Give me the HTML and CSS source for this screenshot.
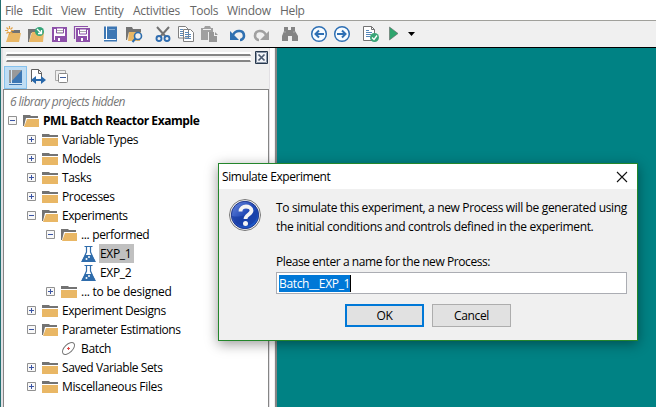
FILE: index.html
```
<!DOCTYPE html>
<html lang="en"><head><meta charset="utf-8"><title>PML Batch Reactor Example</title><link rel="stylesheet" href="styles.css"></head>
<body>
<svg class="defs" width="0" height="0">
 <symbol id="plus" viewBox="0 0 9 9"><path d="M.5 .5h8v8h-8z" fill="#f8f8f8" stroke="#919191"/><path d="M2 4.5h5M4.5 2v5" stroke="#3a54a4"/></symbol>
 <symbol id="minus" viewBox="0 0 9 9"><path d="M.5 .5h8v8h-8z" fill="#f8f8f8" stroke="#919191"/><path d="M2 4.5h5" stroke="#3a54a4"/></symbol>
 <symbol id="folder" viewBox="0 0 16 13"><path d="M0 1h7l1 1h8v2H0z" fill="#737373"/><path d="M0 4h16v1H0z" fill="#fff"/><path d="M0 5h16v8H0z" fill="#e9b765"/></symbol>
 <symbol id="open" viewBox="0 0 16 13"><path d="M0 1h7l1 1h7v2H3L1 12H0z" fill="#737373"/><path d="M4 5h12v8H1z" fill="#e9b765"/></symbol>
 <symbol id="flask" viewBox="0 0 15 16"><path d="M3.500 .5h8" stroke="#2f6cab"/><path d="M5.500 1v5L2 14h11L9.500 6V1" fill="#fff" stroke="#2f6cab" stroke-width="1.200"/><path d="M4 9h7l4 7H0z" fill="#2f6cab"/><circle cx="5.500" cy="13" r="1" fill="#fff"/><circle cx="8" cy="11" r="1" fill="#fff"/></symbol>
</svg>
<div class="app">
 <nav class="menu"><span class="m1">File</span><span class="m2">Edit</span><span class="m3">View</span><span class="m4">Entity</span><span class="m5">Activities</span><span class="m6">Tools</span><span class="m7">Window</span><span class="m8">Help</span></nav>
 <div class="toolbar"><svg width="420" height="26" viewBox="0 21 420 26">
  <path d="M8 30h12v3H8z" fill="#737373"/><path d="M9 33h12l-2 9H6z" fill="#e9b765"/><path d="M9.500 26v9M5 30.500h9M6.500 27.500l6 6M12.500 27.500l-6 6" stroke="#e2a348" stroke-width="1.200"/><circle cx="9.500" cy="30.500" r="1.500" fill="#fff"/>
  <path d="M28 29h8v4h-5l-2 9h-1z" fill="#737373"/><path d="M32 32h12l-1 10H29z" fill="#e9b765"/><circle cx="39.500" cy="31.500" r="4.500" fill="#36a579"/><path d="M37 29l4 4M41.500 30v3.500H38" stroke="#fff" fill="none" stroke-width="1.300"/>
  <g fill="#fff" stroke="#8d50a9" stroke-width="2"><path d="M53 28h13v13H53z"/><path d="M56.500 28h7v5h-7z" stroke-width="1"/><path d="M56 37h8v4h-8z" fill="#8d50a9"/><path d="M59 38v3" stroke="#fff"/><path d="M74.500 39V26.500H88" fill="none" stroke-width="1.200"/><path d="M77 29h12v12H77z"/><path d="M79.500 29h7v5h-7z" stroke-width="1"/><path d="M79 37h7v4h-7z" fill="#8d50a9"/><path d="M82 38v3" stroke="#fff"/></g><path d="M57 30.500h6M57 32.500h6M80 31.500h6" stroke="#aaa"/>
  <path d="M104 26.500h13v15h-13z" fill="#3d77b4"/><path d="M106.500 26v13M104 39.500h12" stroke="#fff"/><path d="M109 29.500h6" stroke="#86add2"/>
  <path d="M126 27h6l1 2h8v3h-12l-2 8h-1z" fill="#737373"/><path d="M129 32h12l-1 9h-12z" fill="#e9b765"/><circle cx="138" cy="36" r="3.500" fill="#f0f0f0" stroke="#2d6dad" stroke-width="1.600"/><path d="M135.500 38.500L132.500 42" stroke="#2d6dad" stroke-width="2"/>
  <path d="M157 27l9 10M169 27l-9 10" stroke="#737373" stroke-width="2"/><g fill="none" stroke="#2f6db0" stroke-width="1.900"><circle cx="159" cy="38.500" r="2.500"/><circle cx="167" cy="38.500" r="2.500"/></g>
  <path d="M178.500 26.500h7l3 3V38h-10zM183.500 29.500h7l3 3v9h-10z" fill="#fff" stroke="#808080"/><path d="M180 29.500h3M180 31.500h3M180 33.500h3M180 35.500h3M185 32.500h4M185 34.500h6M185 36.500h6M185 38.500h6" stroke="#5d8ab8"/>
  <path d="M201 28h3l1-2h5l1 2h2v4h-5v8h-7z" fill="#a0a0a0"/><path d="M203 29.500h8" stroke="#eee"/><path d="M209 32h5v4h3v6h-8z" fill="#969696"/><path d="M215 32l3 3h-3z" fill="#969696"/>
  <path d="M233 35c3-6 11-5 11 1 0 2-2 4-4 4" stroke="#2f70b1" stroke-width="2.600" fill="none"/><path d="M230 31v9h9z" fill="#2f70b1"/>
  <path d="M266 35c-3-6-11-5-11 1 0 2 2 4 4 4" stroke="#a0a0a0" stroke-width="2.600" fill="none"/><path d="M269 31v9h-9z" fill="#a0a0a0"/>
  <path d="M284 27h4v3h3v-3h4v4l3 5v5h-6v-5h-4v5h-6v-5l2-5z" fill="#858585"/><path d="M285 31v2M294 31v2" stroke="#aaa"/>
  <g stroke="#2f70b4" fill="#f8fcff"><circle cx="319" cy="34" r="7.300" stroke-width="1.500"/><circle cx="342" cy="34" r="7.300" stroke-width="1.500"/><path d="M324 34h-8M319 30.500L315.500 34l3.500 3.500M337 34h8M342 30.500l3.500 3.500-3.500 3.500" fill="none" stroke-width="2"/></g>
  <path d="M363.500 26.500h8l3 3v11h-11z" fill="#fff" stroke="#737373"/><path d="M371.500 26.500v3h3" fill="none" stroke="#737373"/><path d="M366 30.500h3M366 32.500h6M366 34.500h5M366 36.500h4" stroke="#5687b9"/><circle cx="374.500" cy="37.500" r="4.500" fill="#39a577"/><path d="M372 37.500l2 2 3-4" fill="none" stroke="#fff" stroke-width="1.300"/>
  <path d="M389.500 27l8.500 6.500-8.500 6.500z" fill="#2fa56e" stroke="#666" stroke-width=".6"/><path d="M408 32h7l-3.500 4z" fill="#000"/>
 </svg></div>
 <div class="work">
  <aside class="side">
   <div class="head"><div class="grips"><i></i><i></i></div><svg width="13" height="13"><path d="M.5 .5h12v12H.5z" fill="#f2f4f8" stroke="#27384d"/><path d="M1.500 1.500h10v10h-10z" fill="none" stroke="#8d99aa"/><path d="M3.500 3.500l6 6M9.500 3.500l-6 6" stroke="#4d5c72" stroke-width="1.700"/></svg></div>
   <div class="tools"><span class="selected"><svg width="16" height="18" viewBox="0 0 16 18"><path d="M1 1h13v15H1z" fill="#3d77b4"/><path d="M1 1h13L1 15z" fill="#999"/><path d="M3.500 1v13M1 14.500h13" stroke="#d6e7f5"/></svg></span>
   <svg class="link" width="16" height="18" viewBox="0 0 16 18"><path d="M1.500 14V1.500h7l3 3v5M8.500 1.500v4h3" fill="#fff" stroke="#606060"/><path d="M4 12h9" stroke="#2767a9" stroke-width="2"/><path d="M1 12l5-4v8zM16 12l-5-4v8z" fill="#2767a9"/></svg>
   <svg class="collapse" width="14" height="14" viewBox="0 0 14 14"><path d="M.5 .5h10v10H.5z" fill="#eee" stroke="#aaa"/><rect x="3.500" y="3.500" width="9" height="9" rx="1" fill="#fff" stroke="#888"/><path d="M5 7.500h6" stroke="#3e5c9b"/></svg></div>
   <div class="tree"><div class="note">6 library projects hidden</div>
    <div class="row l0"><svg class="exp"><use href="#minus"/></svg><svg class="ico"><use href="#open"/></svg><b>PML Batch Reactor Example</b></div>
    <div class="row l1"><svg class="exp"><use href="#plus"/></svg><svg class="ico"><use href="#folder"/></svg><span>Variable Types</span></div>
    <div class="row l1"><svg class="exp"><use href="#plus"/></svg><svg class="ico"><use href="#folder"/></svg><span>Models</span></div>
    <div class="row l1"><svg class="exp"><use href="#plus"/></svg><svg class="ico"><use href="#folder"/></svg><span>Tasks</span></div>
    <div class="row l1"><svg class="exp"><use href="#plus"/></svg><svg class="ico"><use href="#folder"/></svg><span>Processes</span></div>
    <div class="row l1"><svg class="exp"><use href="#minus"/></svg><svg class="ico"><use href="#open"/></svg><span class="tight">Experiments</span></div>
    <div class="row l2"><svg class="exp"><use href="#minus"/></svg><svg class="ico"><use href="#open"/></svg><span>... performed</span></div>
    <div class="row l3"><svg class="flask"><use href="#flask"/></svg><span class="current">EXP_1</span></div>
    <div class="row l3"><svg class="flask"><use href="#flask"/></svg><span>EXP_2</span></div>
    <div class="row l2"><svg class="exp"><use href="#plus"/></svg><svg class="ico"><use href="#folder"/></svg><span class="loose">... to be designed</span></div>
    <div class="row l1"><svg class="exp"><use href="#plus"/></svg><svg class="ico"><use href="#folder"/></svg><span class="tight">Experiment Designs</span></div>
    <div class="row l1"><svg class="exp"><use href="#minus"/></svg><svg class="ico"><use href="#open"/></svg><span class="tight">Parameter Estimations</span></div>
    <div class="row batch"><svg width="16" height="16" viewBox="0 0 16 16"><ellipse cx="7.500" cy="7.500" rx="7.500" ry="4" transform="rotate(-44 7.500 7.500)" fill="#fff" stroke="#777"/><path d="M6 7.500h3M7.500 6v3" stroke="#e04848"/></svg><span>Batch</span></div>
    <div class="row l1"><svg class="exp"><use href="#plus"/></svg><svg class="ico"><use href="#folder"/></svg><span class="tight">Saved Variable Sets</span></div>
    <div class="row l1"><svg class="exp"><use href="#plus"/></svg><svg class="ico"><use href="#folder"/></svg><span>Miscellaneous Files</span></div>
   </div>
  </aside><div class="split"></div><main></main>
 </div>
</div>
<section class="dialog" role="dialog">
 <header><span>Simulate Experiment</span><svg width="12" height="12"><path d="M1 1l10 10M11 1L1 11" stroke="#111" stroke-width="1.100"/></svg></header>
 <div class="content">
  <svg class="question" width="34" height="34" viewBox="0 0 34 34"><defs><linearGradient id="blue" x2="1" y2="1"><stop stop-color="#6d8be0"/><stop offset=".5" stop-color="#2048b5"/><stop offset="1" stop-color="#1b62d5"/></linearGradient></defs><circle cx="16" cy="17" r="15.500" fill="#f4f4f4" stroke="#777"/><circle cx="16" cy="17" r="13.700" fill="url(#blue)" stroke="#20398e"/><path d="M3 18C10 20 21 17 28 11a13 13 0 1 1-25 7" fill="#163aa0" opacity=".65"/><path d="M11.500 13.500c0-7 11-6 11-1 0 4-6 4-6 8.500" fill="none" stroke="#f4f4f4" stroke-width="3.800"/><circle cx="16.500" cy="25.500" r="2.500" fill="#f4f4f4"/></svg>
  <div class="copy"><p class="p1">To simulate this experiment, a new Process will be generated using</p><p class="p2">the initial conditions and controls defined in the experiment.</p><label>Please enter a name for the new Process:</label>
   <div class="field"><span>Batch__EXP_1</span></div><div class="buttons"><button class="ok">OK</button><button>Cancel</button></div></div>
 </div>
</section>
</body></html>
```
FILE: styles.css
```
*{box-sizing:border-box}
body{margin:0;width:656px;height:407px;overflow:hidden;position:relative;font:12px/19px "Open Sans","Noto Sans",sans-serif;letter-spacing:-.35px;color:#000}
.defs{position:absolute}
svg{display:block;flex:none}
.app{height:407px;border-left:1px solid #247071;display:flex;flex-direction:column}
.menu{height:21px;display:flex;border-bottom:1px solid #a0a09b;background:#fff;color:#666;padding-left:4px;line-height:21px}
.menu span{white-space:nowrap}
.m1{width:27px}.m2{width:29px}.m3{width:33px}.m4{width:39px}.m5{width:57px}.m6{width:37px}.m7{width:53px}
.m5,.m7{letter-spacing:-.25px}
.toolbar{height:27px;background:#f0f0f0;border-bottom:1px solid #000}
.toolbar svg{margin-left:-1px}
.work{display:flex;height:359px}
.side{width:268px;background:#f0f0f0;border-left:2px solid #e2e0e4;flex:none}
.head{height:17px;display:flex;padding:3px 0 0 3px}
.grips{width:249px;padding-top:1px}
.grips i{display:block;width:245px;height:4px;border:1px solid #fff;border-bottom:2px solid #858585;background:#fff;margin-bottom:2px}
.tools{height:24px;display:flex;align-items:center;padding-left:1px}
.selected{width:23px;height:23px;background:#bfddf4;border:1px solid #86c2ee;padding:2px 3px}
.link{margin-left:3px}.collapse{margin-left:9px}
.tree{height:319px;background:#fff;border:1px solid #858585;border-width:1px 1px 0 1px;padding-top:2px}
.note{font-style:italic;color:#777;height:19px;padding-left:6px;line-height:19px;letter-spacing:-.58px}
.row{height:19px;display:flex;align-items:center;white-space:nowrap}
.row b{letter-spacing:-.43px}
.tight{letter-spacing:-.42px}.loose{letter-spacing:-.25px}
.l0{padding-left:4px}.l1{padding-left:23px}.l2{padding-left:42px}.l3{padding-left:77px}.batch{padding-left:57px}
.exp{width:9px;height:9px;margin-right:6px}
.ico{width:16px;height:13px;margin-right:4px}
.flask{width:15px;height:16px;margin-right:4px}
.batch svg{margin-right:4px}
.current{background:#c0c0c0;padding:0 3px 0 1px;margin-left:-1px}
.split{width:8px;background:#f0f0f0;border-left:1px solid #e2e0e4;border-right:2px solid #858585;box-shadow:inset 4px 0 #fff}
main{flex:1;background:#008284}
.dialog{position:absolute;left:218px;top:163px;width:420px;height:178px;border:1px solid #23862b;background:#f0f0f0;box-shadow:0 3px 12px rgba(0,0,0,.4)}
.dialog header{height:25px;background:#fff;display:flex;justify-content:space-between;align-items:center;padding:0 9px 0 3px;letter-spacing:-.42px}
.content{display:flex;padding:9px 10px 0}
.question{margin-right:13px}
.copy{width:351px;white-space:nowrap}
.copy p{margin:0;height:19px}
.p2{letter-spacing:-.33px}
.copy label{display:block;margin-top:16px;height:20px;letter-spacing:-.42px}
.field{height:22px;background:#fff;border:1px solid #abadb3;padding:2px}
.field span{display:block;width:72px;height:17px;line-height:17px;background:#0078d7;color:#fff;border-right:1px solid #000}
.buttons{display:flex;gap:8px;padding:10px 0 0 69px}
button{width:79px;height:23px;border:1px solid #adadad;background:#e1e1e1;padding:0;font:inherit;letter-spacing:inherit;line-height:20px}
.ok{border:2px solid #0078d7;line-height:18px}
```
